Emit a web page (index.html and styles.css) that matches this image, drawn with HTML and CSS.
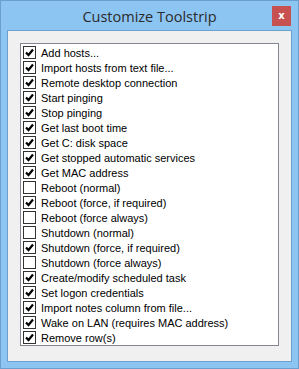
FILE: index.html
```html
<!DOCTYPE html>
<html lang="en">
<head>
<meta charset="UTF-8">
<title>Customize Toolstrip</title>
<link rel="stylesheet" href="styles.css">
</head>
<body>
<div class="window">
  <div class="titlebar">
    <span class="title">Customize Toolstrip</span>
    <div class="close">x</div>
  </div>
  <div class="client">
    <div class="checklist">
      <div class="item checked"><span class="box"></span>Add hosts...</div>
      <div class="item checked"><span class="box"></span>Import hosts from text file...</div>
      <div class="item checked"><span class="box"></span>Remote desktop connection</div>
      <div class="item checked"><span class="box"></span>Start pinging</div>
      <div class="item checked"><span class="box"></span>Stop pinging</div>
      <div class="item checked"><span class="box"></span>Get last boot time</div>
      <div class="item checked"><span class="box"></span>Get C: disk space</div>
      <div class="item checked"><span class="box"></span>Get stopped automatic services</div>
      <div class="item checked"><span class="box"></span>Get MAC address</div>
      <div class="item"><span class="box"></span>Reboot (normal)</div>
      <div class="item checked"><span class="box"></span>Reboot (force, if required)</div>
      <div class="item"><span class="box"></span>Reboot (force always)</div>
      <div class="item"><span class="box"></span>Shutdown (normal)</div>
      <div class="item checked"><span class="box"></span>Shutdown (force, if required)</div>
      <div class="item"><span class="box"></span>Shutdown (force always)</div>
      <div class="item checked"><span class="box"></span>Create/modify scheduled task</div>
      <div class="item checked"><span class="box"></span>Set logon credentials</div>
      <div class="item checked"><span class="box"></span>Import notes column from file...</div>
      <div class="item checked"><span class="box"></span>Wake on LAN (requires MAC address)</div>
      <div class="item checked"><span class="box"></span>Remove row(s)</div>
    </div>
  </div>
</div>
</body>
</html>
```

FILE: styles.css
```css
body {
  margin: 0;
  font-family: 'Liberation Sans', Arial, sans-serif;
}
.window {
  width: 299px;
  height: 369px;
  box-sizing: border-box;
  border: 1px solid #6a9fd0;
  background-color: #8cc4f2;
  padding: 0 6px 6px 6px;
  position: relative;
}
.titlebar {
  height: 29px;
  display: flex;
  justify-content: center;
  align-items: center;
}
.title {
  font-family: 'Open Sans', 'Noto Sans', sans-serif;
  font-size: 14.5px;
  color: #2b2b2b;
  margin-top: 1px;
}
.close {
  position: absolute;
  top: 5px;
  right: 7px;
  width: 19px;
  height: 20px;
  background-color: #c75050;
  color: #fff;
  font-family: 'DejaVu Sans', sans-serif;
  font-weight: bold;
  font-size: 10px;
  line-height: 19px;
  text-align: center;
}
.client {
  height: 332px;
  box-sizing: border-box;
  border: 1px solid #6a9fd0;
  background-color: #f0f0f0;
  padding: 12px 12px 15px 12px;
}
.checklist {
  height: 303px;
  box-sizing: border-box;
  border: 1px solid #828790;
  background-color: #fff;
  padding-top: 1px;
  overflow: hidden;
}
.item {
  height: 15px;
  display: flex;
  align-items: center;
  font-size: 11px;
  color: #000;
  white-space: nowrap;
}
.box {
  width: 13px;
  height: 13px;
  box-sizing: border-box;
  border: 1px solid #333;
  background-color: #fff;
  margin-left: 2px;
  margin-right: 5px;
  flex-shrink: 0;
}
.checked .box {
  background-image: url("data:image/svg+xml,%3Csvg xmlns='http://www.w3.org/2000/svg' width='11' height='11'%3E%3Cpath d='M2 5.5 L4.5 8 L9 2.5' fill='none' stroke='%23000' stroke-width='2.2'/%3E%3C/svg%3E");
  background-repeat: no-repeat;
}
```
